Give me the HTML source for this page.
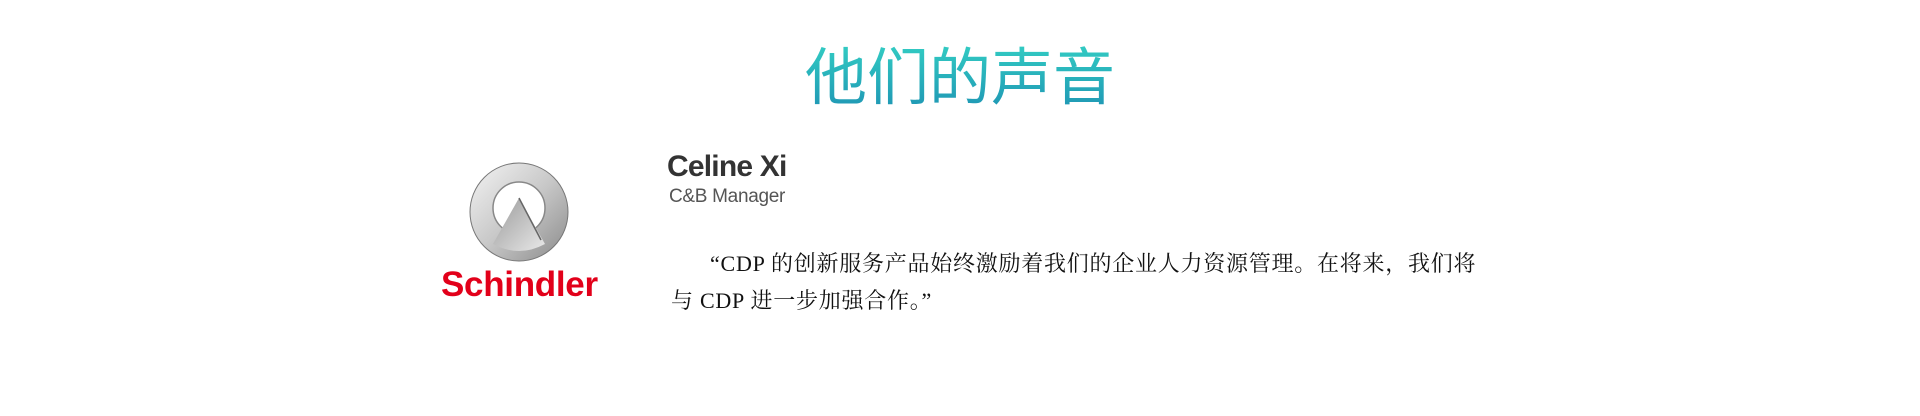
<!DOCTYPE html>
<html><head><meta charset="utf-8"><style>
html,body{margin:0;padding:0;background:#fff;width:1920px;height:416px;overflow:hidden;position:relative}
.t{position:absolute;left:0;width:1920px;top:39px;text-align:center;font:62px "Liberation Sans","Noto Sans CJK SC",sans-serif;line-height:80px;
background:linear-gradient(180deg,#34d0c4 0%,#1c8fb2 100%);-webkit-background-clip:text;background-clip:text;color:transparent}
.name{position:absolute;left:667px;top:150px;font:bold 30px "Liberation Sans",sans-serif;color:#333;letter-spacing:-0.8px}
.role{position:absolute;left:669px;top:186px;font:19px "Liberation Sans",sans-serif;color:#555;letter-spacing:-0.3px}
.q{position:absolute;left:671px;top:245px;font:22px "Liberation Serif","Noto Serif CJK SC",serif;color:#111;line-height:37px;white-space:nowrap;letter-spacing:0.75px}
.sch{position:absolute;left:441px;top:265px;font:bold 35px "Liberation Sans",sans-serif;color:#e2001a;letter-spacing:-0.3px}
</style></head><body>
<div class="t">他们的声音</div>
<svg style="position:absolute;left:465px;top:158px" width="110" height="110" viewBox="0 0 110 110">
<defs>
<linearGradient id="g" x1="0" y1="0" x2="1" y2="1"><stop offset="0" stop-color="#f4f4f4"/><stop offset="0.5" stop-color="#c8c8c8"/><stop offset="1" stop-color="#8a8a8a"/></linearGradient>
<linearGradient id="m" x1="0" y1="0" x2="1" y2="1"><stop offset="0" stop-color="#9a9a9a"/><stop offset="1" stop-color="#e8e8e8"/></linearGradient>
</defs>
<circle cx="54" cy="54" r="49" fill="url(#g)" stroke="#777" stroke-width="1"/>
<circle cx="54" cy="50" r="26" fill="#fff" stroke="#888" stroke-width="1.5"/>
<path d="M54 40 L28 86 Q54 100 80 86 Z" fill="url(#m)"/>
<path d="M54 40 L76 82" stroke="#666" stroke-width="1.5" fill="none"/>
</svg>
<div class="sch">Schindler</div>
<div class="name">Celine Xi</div>
<div class="role">C&amp;B Manager</div>
<div class="q"><span style="display:inline-block;width:39px"></span>“CDP 的创新服务产品始终激励着我们的企业人力资源管理。在将来，我们将<br>与 CDP 进一步加强合作。”</div>
</body></html>
